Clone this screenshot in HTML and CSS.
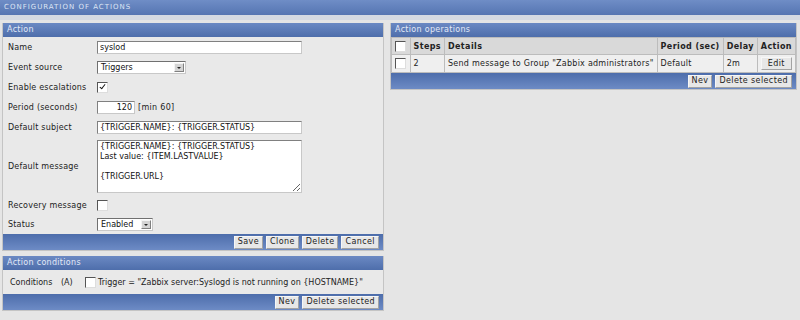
FILE: index.html
```html
<!DOCTYPE html>
<html lang="en">
<head>
    <meta charset="UTF-8">
    <title>Configuration of actions</title>
    <link rel="stylesheet" href="styles.css">
</head>
<body>
    <div class="page-header">CONFIGURATION OF ACTIONS</div>

    <div class="columns">
        <div class="left-col">
            <div class="panel">
                <div class="panel-title">Action</div>
                <div class="form-row">
                    <div class="form-label">Name</div>
                    <div class="form-field"><input class="text-input wide" type="text" value="syslod"></div>
                </div>
                <div class="form-row">
                    <div class="form-label">Event source</div>
                    <div class="form-field"><span class="fake-select sel-source">Triggers<span class="sel-btn"></span></span></div>
                </div>
                <div class="form-row">
                    <div class="form-label">Enable escalations</div>
                    <div class="form-field"><span class="check checked"></span></div>
                </div>
                <div class="form-row">
                    <div class="form-label">Period (seconds)</div>
                    <div class="form-field"><input class="text-input period" type="text" value="120"><span class="hint">[min 60]</span></div>
                </div>
                <div class="form-row">
                    <div class="form-label">Default subject</div>
                    <div class="form-field"><input class="text-input wide" type="text" value="{TRIGGER.NAME}: {TRIGGER.STATUS}"></div>
                </div>
                <div class="form-row message-row">
                    <div class="form-label">Default message</div>
                    <div class="form-field"><textarea class="text-area">{TRIGGER.NAME}: {TRIGGER.STATUS}
Last value: {ITEM.LASTVALUE}

{TRIGGER.URL}</textarea></div>
                </div>
                <div class="form-row short-row">
                    <div class="form-label">Recovery message</div>
                    <div class="form-field"><span class="check"></span></div>
                </div>
                <div class="form-row">
                    <div class="form-label">Status</div>
                    <div class="form-field"><span class="fake-select sel-status">Enabled<span class="sel-btn"></span></span></div>
                </div>
                <div class="button-bar">
                    <button class="btn">Save</button>
                    <button class="btn">Clone</button>
                    <button class="btn">Delete</button>
                    <button class="btn">Cancel</button>
                </div>
            </div>

            <div class="panel">
                <div class="panel-title">Action conditions</div>
                <div class="cond-row">
                    <span class="cond-label">Conditions</span>
                    <span class="cond-tag">(A)</span>
                    <span class="check"></span>
                    <span class="cond-text">Trigger = "Zabbix server:Syslogd is not running on {HOSTNAME}"</span>
                </div>
                <div class="button-bar">
                    <button class="btn">Nev</button>
                    <button class="btn">Delete selected</button>
                </div>
            </div>
        </div>

        <div class="right-col">
            <div class="panel">
                <div class="panel-title">Action operations</div>
                <table class="ops-table">
                    <thead>
                        <tr>
                            <th class="c-check"><span class="check"></span></th>
                            <th class="c-steps">Steps</th>
                            <th class="c-details">Details</th>
                            <th class="c-period">Period (sec)</th>
                            <th class="c-delay">Delay</th>
                            <th class="c-action">Action</th>
                        </tr>
                    </thead>
                    <tbody>
                        <tr>
                            <td class="c-check"><span class="check"></span></td>
                            <td>2</td>
                            <td>Send message to Group "Zabbix administrators"</td>
                            <td>Default</td>
                            <td>2m</td>
                            <td><button class="btn small">Edit</button></td>
                        </tr>
                    </tbody>
                </table>
                <div class="button-bar">
                    <button class="btn">Nev</button>
                    <button class="btn">Delete selected</button>
                </div>
            </div>
        </div>
    </div>
</body>
</html>
```

FILE: styles.css
```css
body {
    margin: 0;
    background: #e5e5e5;
    font-family: "DejaVu Sans", Verdana, sans-serif;
    font-size: 8px;
    color: #222;
}
.page-header {
    height: 15px;
    line-height: 14px;
    padding-left: 4px;
    background: linear-gradient(#6f8dc6, #5575b2);
    color: #dde5f4;
    letter-spacing: 1px;
    font-size: 7px;
    border-bottom: 5px solid #d4d9e2;
}
.columns {
    display: flex;
    gap: 6px;
    padding: 3px 3px 0 2px;
    align-items: flex-start;
}
.left-col {
    width: 382px;
    display: flex;
    flex-direction: column;
    gap: 5px;
}
.right-col {
    width: 407px;
}
.panel {
    background: #e9e9e9;
    border: 1px solid #c4c4c4;
    border-top: none;
}
.panel-title {
    height: 14px;
    line-height: 14px;
    padding-left: 4px;
    background: linear-gradient(#6b89c3, #4e6eab);
    color: #e3e9f7;
    letter-spacing: 0.3px;
}
.form-row {
    display: flex;
    align-items: center;
    height: 20px;
}
.message-row {
    height: 59px;
}
.short-row {
    height: 18px;
}
.form-label {
    width: 89px;
    padding-left: 5px;
    letter-spacing: 0.2px;
}
.form-field {
    display: flex;
    align-items: center;
    gap: 3px;
}
.text-input {
    height: 13px;
    box-sizing: border-box;
    border: 1px solid #808080;
    border-right-color: #c8c8c8;
    border-bottom-color: #c8c8c8;
    background: #fff;
    font-family: inherit;
    font-size: 8px;
    padding: 0 2px;
    color: #111;
}
.wide {
    width: 205px;
}
.period {
    width: 38px;
    text-align: right;
}
.hint {
    letter-spacing: 0.3px;
}
.text-area {
    width: 205px;
    height: 53px;
    box-sizing: border-box;
    border: 1px solid #808080;
    border-right-color: #c8c8c8;
    border-bottom-color: #c8c8c8;
    font-family: inherit;
    font-size: 8px;
    line-height: 10px;
    padding: 1px 2px;
    resize: both;
    overflow: hidden;
    color: #111;
}
.fake-select {
    position: relative;
    display: inline-block;
    height: 13px;
    box-sizing: border-box;
    line-height: 11px;
    border: 1px solid #707070;
    border-right-color: #c8c8c8;
    border-bottom-color: #c8c8c8;
    background: #fff;
    padding-left: 3px;
    color: #111;
}
.sel-source {
    width: 89px;
}
.sel-status {
    width: 56px;
}
.sel-btn {
    position: absolute;
    right: 1px;
    top: 1px;
    width: 10px;
    height: 9px;
    background: #d4d4d4;
    border: 1px solid #f4f4f4;
    border-right-color: #808080;
    border-bottom-color: #808080;
    box-sizing: border-box;
}
.sel-btn::after {
    content: "";
    position: absolute;
    left: 2px;
    top: 3px;
    border-left: 2px solid transparent;
    border-right: 2px solid transparent;
    border-top: 2px solid #222;
}
.check {
    display: inline-block;
    position: relative;
    width: 11px;
    height: 11px;
    box-sizing: border-box;
    background: #fff;
    border: 1px solid #555;
    border-right-color: #ddd;
    border-bottom-color: #ddd;
    vertical-align: middle;
    flex-shrink: 0;
}
.checked::after {
    content: "";
    position: absolute;
    left: 3px;
    top: 0px;
    width: 2px;
    height: 5px;
    border-right: 1.5px solid #111;
    border-bottom: 1.5px solid #111;
    transform: rotate(38deg);
}
.button-bar {
    display: flex;
    justify-content: flex-end;
    gap: 3px;
    height: 16px;
    align-items: center;
    padding-right: 4px;
    background: linear-gradient(#4d6dab, #6d8bc5);
}
.btn {
    height: 13px;
    padding: 0 3px;
    background: #e7e7e7;
    border: 1px solid #f6f6f6;
    border-right-color: #a3a3a3;
    border-bottom-color: #a3a3a3;
    font-family: inherit;
    font-size: 8px;
    letter-spacing: 0.4px;
    color: #222;
    line-height: 10px;
}
.btn.small {
    height: 13px;
    padding: 0 6px;
}
.cond-row {
    display: flex;
    align-items: center;
    height: 24px;
    padding-left: 7px;
    white-space: nowrap;
}
.cond-label {
    width: 51px;
    flex-shrink: 0;
}
.cond-tag {
    width: 24px;
    flex-shrink: 0;
}
.cond-text {
    margin-left: 2px;
}
.ops-table {
    width: 100%;
    border-collapse: collapse;
    background: #efefef;
    letter-spacing: 0.25px;
}
.ops-table th,
.ops-table td {
    border: 1px solid #bcbcbc;
    padding: 0 3px;
    text-align: left;
    height: 16px;
    white-space: nowrap;
}
.ops-table th {
    background: #d9d9d9;
    font-weight: bold;
    letter-spacing: 0.4px;
}
.ops-table td {
    height: 17px;
}
.c-check {
    width: 16px;
}
.c-steps {
    width: 26px;
}
.c-action {
    width: 32px;
}
```
